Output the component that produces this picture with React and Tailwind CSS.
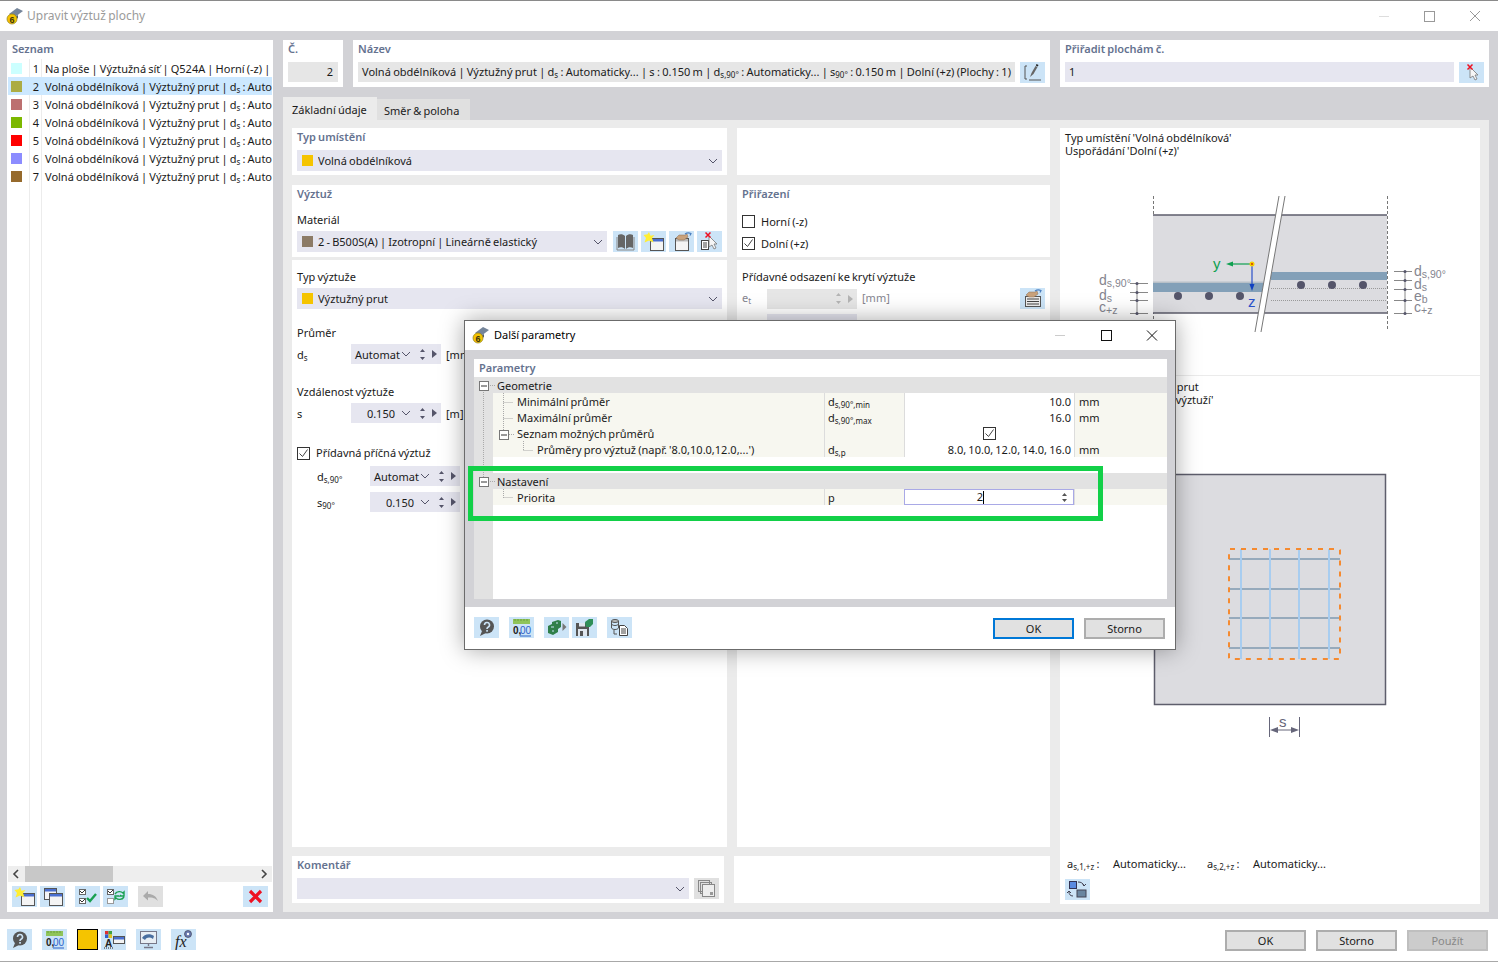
import React from 'react';

const font = "font-['Noto_Sans',sans-serif]";

const rows = [
    ['#ccffff', 'Na ploše | Výztužná síť | Q524A | Horní (-z) | Dolní (+z)'],
    ['#acac44', null],
    ['#bc7070', null],
    ['#7cb800', null],
    ['#ff0000', null],
    ['#8c8cff', null],
    ['#966a2c', null],
];

const Chevron = ({ className = '' }) => (
    <svg width="10" height="6" viewBox="0 0 10 6" className={className}>
        <path d="M1 1l4 4 4-4" fill="none" stroke="#55556a" strokeWidth="1" />
    </svg>
);

const Spin = ({ color = '#55556a' }) => (
    <div className="flex items-center gap-[6px]">
        <svg width="7" height="13" viewBox="0 0 7 13">
            <path d="M3.500 1L6 4H1z M3.500 12L1 9h5z" fill={color} />
        </svg>
        <svg width="5" height="8" viewBox="0 0 5 8">
            <path d="M0 0l5 4-5 4z" fill={color} />
        </svg>
    </div>
);

const Sub = ({ children }) => <sub className="text-[8px] leading-none">{children}</sub>;

const Header = ({ children }) => (
    <div className="h-[18px] leading-[18px] font-semibold text-[#65728f]">{children}</div>
);

const Select = ({ color, children, className = '' }) => (
    <div className={`h-[21px] bg-[#e6e6f0] flex items-center pl-[5px] pr-[4px] ${className}`}>
        {color && <span className="w-[11px] h-[11px] mr-[5px] shrink-0" style={{ backgroundColor: color }} />}
        <span className="flex-1 truncate pt-[2px]">{children}</span>
        <Chevron />
    </div>
);

const SpinBox = ({ value, align = 'right', className = '' }) => (
    <div className={`w-[90px] h-[20px] bg-[#e6e6f0] flex items-center pr-[4px] ${className}`}>
        <span className={`flex-1 min-w-0 whitespace-nowrap pl-[4px] pt-[2px] ${align === 'right' ? 'text-right pr-[5px]' : 'text-left'}`}>{value}</span>
        <Chevron className="ml-[1px] mr-[8px] shrink-0" />
        <Spin />
    </div>
);

const Check = ({ checked }) => (
    <span className="w-[13px] h-[13px] border border-[#333] bg-white flex items-center justify-center shrink-0">
        {checked && (
            <svg width="11" height="11" viewBox="0 0 11 11">
                <path d="M1.500 5.500l3 3 5-7" fill="none" stroke="#444" strokeWidth="1" />
            </svg>
        )}
    </span>
);

const Win = ({ x, y, w = 12, h = 12, title = '#4a6fd0' }) => (
    <g>
        <rect x={x + 0.5} y={y + 0.5} width={w} height={h} fill="#f4f4f4" stroke="#555" />
        <rect x={x + 1} y={y + 1} width={w - 1} height="2.5" fill={title} />
    </g>
);

const Star = ({ x, y }) => (
    <path
        transform={`translate(${x} ${y})`}
        d="M0-6l1.500 3.800L5.500-3 3 0l1.500 4.500L0 2.500-4.500 4.500-3 0-5.500-3l4-.8z"
        fill="#ffee33"
    />
);

const Hand = ({ x, y }) => (
    <g transform={`translate(${x} ${y})`}>
        <path d="M0 4l3-3h6l2-1 1 3-4 3H3z" fill="#c9a27c" stroke="#8a6f55" strokeWidth="0.5" />
        <path d="M9 0c2-1.500 4-1.500 6-.5l-1 2" fill="none" stroke="#4a7fc0" strokeWidth="1.200" />
    </g>
);

const Cursor = ({ x, y }) => (
    <path transform={`translate(${x} ${y})`} d="M0 0l8 8H5l2 4-2 1-2-4-3 2z" fill="#f6f6f6" stroke="#777" strokeWidth="0.8" />
);

const RedX = ({ x, y, s = 2.5 }) => (
    <path d={`M${x - s} ${y - s}l${2 * s} ${2 * s}m0 ${-2 * s}l${-2 * s} ${2 * s}`} stroke="#ee1122" strokeWidth="1.5" />
);

const icons = {
    help: (
        <>
            <circle cx="13" cy="9.500" r="7" fill="#555" />
            <path d="M8 14l-2 5 6-3z" fill="#555" />
            <path d="M10.500 8a2.500 2.500 0 1 1 3.500 2.300c-.8.4-1 .9-1 1.700" fill="none" stroke="#cce4f7" strokeWidth="1.600" />
            <rect x="12.200" y="13" width="1.700" height="1.700" fill="#cce4f7" />
        </>
    ),
    decimal: (
        <>
            <rect x="4" y="2" width="17" height="5" fill="#8fc45a" />
            <path d="M6 2v2M9 2v2M12 2v2M15 2v2M18 2v2" stroke="#6a9e3c" />
            <text x="4" y="17" fontSize="10" fontFamily="Liberation Sans" fontWeight="bold" fill="#222">0,</text>
            <text x="11" y="17" fontSize="10" fontFamily="Liberation Sans" fill="#2a62c9">00</text>
            <path d="M11 19h11" stroke="#2a62c9" />
        </>
    ),
    newWin: (
        <>
            <Win x={9} y={7} w={13} h={12} />
            <Star x={8} y={7} />
        </>
    ),
    copyWin: (
        <>
            <Win x={4} y={2} w={12} h={11} />
            <Win x={9} y={7} w={13} h={12} />
        </>
    ),
    checkAll: (
        <>
            <rect x="4.500" y="3.500" width="6" height="5" fill="#fff" stroke="#666" />
            <rect x="4.500" y="12.500" width="6" height="5" fill="#fff" stroke="#666" />
            <path d="M5 5l2 2 3-3M5 14l2 2 3-3" fill="none" stroke="#333" />
            <path d="M12 12l3 3 6-7" fill="none" stroke="#18a050" strokeWidth="2.400" />
        </>
    ),
    swapCheck: (
        <>
            <rect x="4.500" y="3.500" width="6" height="5" fill="#fff" stroke="#666" />
            <rect x="4.500" y="12.500" width="6" height="5" fill="#fff" stroke="#999" />
            <path d="M5 5l2 2 3-3" fill="none" stroke="#333" />
            <path d="M12 8c2-3 6-3 8-1l1-1v4h-4l1-1M21 11c-2 3-6 3-8 1l-1 1v-3h4" fill="none" stroke="#18a050" strokeWidth="1.400" />
        </>
    ),
    undo: <path d="M5 10l5-5v3c5 0 8 2 10 7-3-3-5-3.500-10-3.500v3z" fill="#aaa" />,
    del: <path d="M7 5l11 11M18 5L7 16" stroke="#ee1122" strokeWidth="3.200" />,
    book: (
        <>
            <path d="M5 4c2-1 5-1 7 1v13c-2-2-5-2-7-1z" fill="#666" />
            <path d="M20 4c-2-1-5-1-7 1v13c2-2 5-2 7-1z" fill="#666" />
            <path d="M4 6v13h17V6" fill="none" stroke="#888" />
        </>
    ),
    handWin: (
        <>
            <Win x={6} y={7} w={13} h={12} title="#bbb" />
            <Hand x={7} y={3} />
        </>
    ),
    handList: (
        <>
            <rect x="5.500" y="8.500" width="15" height="10" fill="#eee" stroke="#555" />
            <path d="M7 11h12M7 13.500h12M7 16h12" stroke="#444" />
            <Hand x={6} y={3} />
        </>
    ),
    delPick: (
        <>
            <rect x="4.500" y="9.500" width="7" height="9" fill="#fff" stroke="#444" />
            <path d="M6 12h4M6 14h4M6 16h4" stroke="#444" />
            <Cursor x={12} y={5} />
            <RedX x={11} y={4} />
        </>
    ),
    pick: (
        <>
            <Cursor x={11} y={5} />
            <RedX x={11} y={5} />
        </>
    ),
    edit: (
        <>
            <path d="M7 4H5v13h2M9 18h12" fill="none" stroke="#555" strokeWidth="1" />
            <path d="M10 15l1.500-4 4-7 2 1-4 7z" fill="#666" />
            <path d="M15.800 3.500l.7-1.500 2 1-.7 1.500z" fill="#222" />
        </>
    ),
    palette: (
        <>
            <rect x="4" y="2" width="3.500" height="3.500" fill="#e03030" />
            <rect x="7.500" y="2" width="3.500" height="3.500" fill="#40a040" />
            <rect x="4" y="5.500" width="3.500" height="3.500" fill="#3060d0" />
            <rect x="7.500" y="5.500" width="3.500" height="3.500" fill="#e0c020" />
            <Win x={12} y={7} w={11} h={7} title="#4a6fd0" />
            <text x="4" y="18" fontSize="10" fontFamily="Liberation Sans" fontWeight="bold" fill="#222">A</text>
            <path d="M3 19h10" stroke="#222" strokeDasharray="1 1" />
        </>
    ),
    monitor: (
        <>
            <rect x="4.500" y="2.500" width="16" height="12" fill="#e8eef4" stroke="#778" />
            <path d="M6 9c2-4 8-5 12-2l-1 3c-3-2-6-2-8 1z" fill="#4a6fa0" />
            <path d="M12.500 15v2M8 18.500h9" stroke="#778" strokeWidth="1.400" />
        </>
    ),
    fx: (
        <>
            <text x="4" y="18" fontSize="16" fontStyle="italic" fontFamily="Liberation Serif" fill="#222">fx</text>
            <circle cx="17" cy="5" r="3.500" fill="#6a7ab0" stroke="#334" strokeWidth="0.6" />
            <circle cx="17" cy="5" r="1.200" fill="#fff" />
        </>
    ),
    arrowGreen: (
        <>
            <path d="M4 9l4-2V5l6-2 3 1v6l-3 2v3l-5 3-5-2z" fill="#2f7f4a" />
            <path d="M7 10h3M8 14h2M12 6h2" stroke="#cce4f7" />
            <path d="M18.500 6l4 4-4 4z" fill="#777" />
        </>
    ),
    saveGreen: (
        <>
            <path d="M4 6h13v13H4z" fill="#555" />
            <rect x="7" y="6" width="6" height="3.500" fill="#dfe6ee" />
            <rect x="6" y="12" width="9" height="7" fill="#dfe6ee" />
            <rect x="8" y="14" width="3" height="5" fill="#555" />
            <path d="M13 5l4-3h4v5l-3 3h-4z" fill="#2f8f58" />
        </>
    ),
    dbDoc: (
        <>
            <ellipse cx="8" cy="4" rx="3.500" ry="1.500" fill="#bbb" stroke="#555" />
            <path d="M4.500 4v7c1 2 6 2 7 0V4M4.500 7c1 2 6 2 7 0" fill="none" stroke="#555" />
            <path d="M7 13v4h3" fill="none" stroke="#555" />
            <path d="M12.500 8.500h5l3 3v7h-8z" fill="#fff" stroke="#444" />
            <path d="M14 12h5M14 14h5M14 16h5" stroke="#444" />
        </>
    ),
    swapView: (
        <>
            <rect x="4.500" y="2.500" width="7" height="7" fill="#5a8ae0" stroke="#335" />
            <rect x="12" y="11" width="9" height="7" fill="#6a86a0" stroke="#445" />
            <path d="M13 3c3 0 5 1 6 4M18 5l1 2 2-2M4 13c0 2 1 4 4 4M6 14l-2-2-2 2" fill="none" stroke="#445" />
        </>
    ),
    copyGray: (
        <>
            <rect x="4.500" y="2.500" width="11" height="11" fill="none" stroke="#888" />
            <rect x="6.500" y="4.500" width="11" height="11" fill="none" stroke="#888" />
            <rect x="8.500" y="6.500" width="12" height="12" fill="#eee" stroke="#888" />
            <rect x="16" y="14" width="3" height="3" fill="#999" />
        </>
    ),
};

const IconBtn = ({ icon, disabled = false, className = '' }) => (
    <button className={`w-[25px] h-[21px] shrink-0 ${disabled ? 'bg-[#e0e0e0]' : 'bg-[#cce4f7]'} ${className}`}>
        <svg width="25" height="21" viewBox="0 0 25 21" className="block">{icons[icon]}</svg>
    </button>
);

const AppIcon = () => (
    <svg width="17" height="17" viewBox="0 0 17 17" className="shrink-0">
        <path d="M3 6l8-6 6 3-8 6z" fill="#75859a" />
        <path d="M4 6.500l5 2.500 3-2v3l-3 2z" fill="#4f5d70" />
        <circle cx="6" cy="11" r="5" fill="#f5c400" stroke="#8f7d1c" strokeWidth="0.7" />
        <text x="3.600" y="14.500" fontSize="9" fontWeight="bold" fontFamily="Liberation Sans" fill="#3a3410">6</text>
    </svg>
);

const DlgBtn = ({ children, variant, className = '' }) => {
    const look = variant === 'primary'
        ? 'border-[#0078d7] bg-[#e1e1e1]'
        : variant === 'disabled'
            ? 'border-[#bfbfbf] bg-[#cccccc] text-[#888]'
            : 'border-[#adadad] bg-[#e1e1e1]';
    return (
        <button className={`w-[81px] h-[21px] border-2 text-center leading-[17px] ${look} ${className}`}>
            {children}
        </button>
    );
};

const ParamRow = ({ label, indent, sym, value, unit, children }) => (
    <div className="h-[16px] flex">
        <div className="w-[19px] bg-[#e2e2e2]" />
        <div className={`w-[331px] bg-[#f7f7f0] leading-[18px] whitespace-nowrap ${indent}`}>{label}</div>
        <div className="w-[80px] bg-[#f7f7f0] border-l border-[#dcdcdc] pl-[3px] leading-[18px]">{sym}</div>
        {children || (
            <div className="w-[170px] text-right pr-[3px] border-l border-[#dcdcdc] leading-[18px] bg-white">{value}</div>
        )}
        <div className="flex-1 bg-[#f7f7f0] border-l border-[#dcdcdc] pl-[4px] leading-[18px]">{unit}</div>
    </div>
);

const SlabDrawing = () => (
    <svg width="420" height="150" viewBox="1060 190 420 150" fontFamily="Liberation Sans" className="block">
        <path d="M1153.500 196v135M1387.500 196v135" stroke="#777" strokeDasharray="3 2" />
        <rect x="1153" y="215" width="234" height="98" fill="#dcdce0" />
        <path d="M1153 215h234M1153 313h234" stroke="#5e5e6c" strokeWidth="1.600" />
        <rect x="1153" y="283" width="110" height="9" fill="#83a0b8" />
        <rect x="1153" y="281.500" width="110" height="1.500" fill="#b8c0c8" />
        <rect x="1271" y="272" width="116" height="8" fill="#83a0b8" />
        <path d="M1271 288.500h116M1271 300.500h116" stroke="#999" strokeDasharray="1 1" />
        <g fill="#55556a">
            <circle cx="1178" cy="296" r="4" />
            <circle cx="1209" cy="296" r="4" />
            <circle cx="1240" cy="296" r="4" />
            <circle cx="1301" cy="285" r="4" />
            <circle cx="1332" cy="285" r="4" />
            <circle cx="1363" cy="285" r="4" />
        </g>
        <path d="M1279 196l-24 136h6l24-136z" fill="#fff" />
        <path d="M1279 196l-24 136M1285 196l-24 136" stroke="#777" />
        <path d="M1252 264h-20" stroke="#10a050" strokeWidth="1.200" />
        <path d="M1226 264l7-2.500v5z" fill="#10a050" />
        <path d="M1252 264v22" stroke="#2a50c8" strokeWidth="1.200" />
        <path d="M1252 291l-2.500-7h5z" fill="#1040c0" />
        <circle cx="1252" cy="264" r="2.500" fill="#f5d000" />
        <circle cx="1252" cy="264" r="0.900" fill="#d02000" />
        <text x="1213" y="269" fontSize="15" fill="#10a050">y</text>
        <text x="1248" y="307" fontSize="15" fill="#2a50c8">z</text>
        <path d="M1137 283v30M1130 283.500h18M1130 292.500h18M1130 300.500h18M1130 313.500h18" stroke="#888" />
        <path d="M1405 271v42M1394 271.500h18M1394 280.500h18M1394 289.500h18M1394 300.500h18M1394 313.500h18" stroke="#888" />
        <g fill="#55556a">
            <circle cx="1137" cy="283.500" r="1.500" />
            <circle cx="1137" cy="292.500" r="1.500" />
            <circle cx="1137" cy="300.500" r="1.500" />
            <circle cx="1137" cy="313.500" r="1.500" />
            <circle cx="1405" cy="271.500" r="1.500" />
            <circle cx="1405" cy="280.500" r="1.500" />
            <circle cx="1405" cy="289.500" r="1.500" />
            <circle cx="1405" cy="300.500" r="1.500" />
            <circle cx="1405" cy="313.500" r="1.500" />
        </g>
        <g fill="#85858f" fontSize="14">
            <text x="1099" y="285">d<tspan fontSize="10.500" dy="2">s,90°</tspan></text>
            <text x="1099" y="300">d<tspan fontSize="10.500" dy="2">s</tspan></text>
            <text x="1099" y="312">c<tspan fontSize="10.500" dy="2">+z</tspan></text>
            <text x="1414" y="276">d<tspan fontSize="10.500" dy="2">s,90°</tspan></text>
            <text x="1414" y="289">d<tspan fontSize="10.500" dy="2">s</tspan></text>
            <text x="1414" y="301">e<tspan fontSize="10.500" dy="2">b</tspan></text>
            <text x="1414" y="312">c<tspan fontSize="10.500" dy="2">+z</tspan></text>
        </g>
    </svg>
);

const PlanDrawing = () => (
    <svg width="420" height="270" viewBox="1060 470 420 270" fontFamily="Liberation Sans" className="block">
        <rect x="1154.500" y="474.500" width="231" height="230" fill="#dcdce0" stroke="#5e5e6c" strokeWidth="1.500" />
        <path d="M1229 559h111M1229 589h111M1229 618h111M1229 648h111" stroke="#7f99b0" strokeWidth="1.600" />
        <path d="M1241 549v110M1270 549v110M1299 549v110M1329 549v110" stroke="#a8cdf0" strokeWidth="2" />
        <rect x="1229" y="549" width="111" height="110" rx="1" fill="none" stroke="#f58a30" strokeWidth="2" strokeDasharray="5 6" />
        <path d="M1269.500 717v20M1299.500 717v20" stroke="#66667a" />
        <path d="M1276 730h16" stroke="#66667a" />
        <path d="M1270 730l8-3v6zM1299 730l-8-3v6z" fill="#66667a" />
        <text x="1279" y="727" fontSize="15" fill="#66667a">s</text>
    </svg>
);

const TreeLines = () => (
    <svg width="90" height="130" viewBox="474 377 90 130" className="absolute left-0 top-[18px] pointer-events-none">
        <path
            d="M483.500 390v87M488 385.500h7M488 481.500h7M503.500 393v37M503.500 402.500h10M503.500 418.500h10M509 434.500h6M523.500 441v10M523.500 450.500h10M503.500 489v9M503.500 497.500h10"
            fill="none"
            stroke="#aaa"
            strokeDasharray="1 1"
        />
        <g fill="#fff" stroke="#777">
            <rect x="479.500" y="381.500" width="9" height="9" />
            <rect x="499.500" y="430.500" width="9" height="9" />
            <rect x="479.500" y="477.500" width="9" height="9" />
        </g>
        <path d="M481 386h6M501 435h6M481 482h6" stroke="#333" />
    </svg>
);

const ParamsDialog = () => (
    <div className="absolute left-[464px] top-[320px] w-[712px] h-[330px] bg-white border border-[#6b6b6b] shadow-[0_0_22px_rgba(0,0,0,0.35)] flex flex-col">
        <div className="h-[29px] flex items-center pl-[7px]">
            <AppIcon />
            <span className="ml-[5px] text-black">Další parametry</span>
            <div className="ml-auto flex items-center">
                <svg width="46" height="29" viewBox="0 0 46 29">
                    <path d="M18 14.500h10" stroke="#ccc" />
                </svg>
                <svg width="46" height="29" viewBox="0 0 46 29">
                    <rect x="18.500" y="9.500" width="10" height="10" fill="none" stroke="#111" />
                </svg>
                <svg width="46" height="29" viewBox="0 0 46 29">
                    <path d="M18 9.500l10 10m0-10l-10 10" stroke="#111" />
                </svg>
            </div>
        </div>
        <div className="h-[257px] bg-[#d2d2d6] pl-[9px] pr-[8px] py-[9px]">
            <div className="relative h-[240px] bg-white flex flex-col">
                <div className="h-[18px] px-[5px] leading-[18px] font-semibold text-[#65728f]">Parametry</div>
                <div className="h-[16px] bg-[#e2e2e2] pl-[23px] leading-[18px]">Geometrie</div>
                <ParamRow label="Minimální průměr" indent="pl-[24px]" sym={<>d<Sub>s,90°,min</Sub></>} value="10.0" unit="mm" />
                <ParamRow label="Maximální průměr" indent="pl-[24px]" sym={<>d<Sub>s,90°,max</Sub></>} value="16.0" unit="mm" />
                <ParamRow label="Seznam možných průměrů" indent="pl-[24px]">
                    <div className="w-[170px] bg-white border-l border-[#dcdcdc] flex items-center justify-center">
                        <Check checked />
                    </div>
                </ParamRow>
                <ParamRow label="Průměry pro výztuž (např. '8.0,10.0,12.0,...')" indent="pl-[44px]" sym={<>d<Sub>s,p</Sub></>} value="8.0, 10.0, 12.0, 14.0, 16.0" unit="mm" />
                <div className="h-[16px] flex"><div className="w-[19px] bg-[#e2e2e2]" /></div>
                <div className="h-[16px] bg-[#e2e2e2] pl-[23px] leading-[18px]">Nastavení</div>
                <ParamRow label="Priorita" indent="pl-[24px]" sym="p">
                    <div className="w-[170px] h-[16px] bg-white border border-[#a9a9e6] flex items-center">
                        <span className="w-[78px] text-right leading-[14px]">2</span>
                        <span className="w-[1px] h-[13px] bg-black" />
                        <svg width="7" height="11" viewBox="0 0 7 11" className="ml-auto mr-[5px]">
                            <path d="M3.500 1L6 4H1z M3.500 10L1 7h5z" fill="#555" />
                        </svg>
                    </div>
                </ParamRow>
                <div className="flex-1 flex">
                    <div className="w-[19px] bg-[#e2e2e2]" />
                </div>
                <TreeLines />
            </div>
        </div>
        <div className="flex-1 flex items-center pl-[9px] pr-[10px]">
            <IconBtn icon="help" className="mb-[2px]" />
            <IconBtn icon="decimal" className="ml-[10px] mb-[2px]" />
            <IconBtn icon="arrowGreen" className="ml-[10px] mb-[2px]" />
            <IconBtn icon="saveGreen" className="ml-[3px] mb-[2px]" />
            <IconBtn icon="dbDoc" className="ml-[10px] mb-[2px]" />
            <DlgBtn variant="primary" className="ml-auto">OK</DlgBtn>
            <DlgBtn className="ml-[10px]">Storno</DlgBtn>
        </div>
        <div className="absolute left-[3px] top-[145px] w-[635px] h-[55px] border-[5px] border-[#12d048] pointer-events-none" />
    </div>
);

const App = () => {
    return (
        <div className={`relative w-[1498px] h-[962px] overflow-hidden flex flex-col bg-white text-[11px] text-[#1a1a1a] [word-spacing:-0.7px] ${font}`}>
            {/* title bar */}
            <div className="h-[31px] border-t border-[#8a8a8a] flex items-center pl-[6px] shrink-0">
                <AppIcon />
                <span className="ml-[4px] text-[#9b9b9b] text-[12px]">Upravit výztuž plochy</span>
                <div className="ml-auto flex items-center">
                    <svg width="46" height="30" viewBox="0 0 46 30">
                        <path d="M19 15.500h10" stroke="#ddd" />
                    </svg>
                    <svg width="46" height="30" viewBox="0 0 46 30">
                        <rect x="18.500" y="10.500" width="10" height="10" fill="none" stroke="#999" />
                    </svg>
                    <svg width="46" height="30" viewBox="0 0 46 30">
                        <path d="M18 10l10 10m0-10L18 20" stroke="#999" />
                    </svg>
                </div>
            </div>

            <div className="flex-1 bg-[#d2d2d6] flex gap-[10px] pl-[7px] pt-[9px] pb-[7px] min-h-0">
                {/* list */}
                <div className="relative w-[266px] bg-white flex flex-col px-[1px]">
                    <div className="h-[19px] pl-[4px] leading-[18px] font-semibold text-[#65728f]">Seznam</div>
                    <div className="flex-1 relative overflow-hidden">
                        <div className="absolute left-[21px] top-0 bottom-0 w-[1px] bg-[#ececec]" />
                        <div className="absolute left-[33px] top-0 bottom-0 w-[1px] bg-[#ececec]" />
                        {rows.map(([color, text], i) => (
                            <div key={i} className={`relative h-[18px] flex items-center whitespace-nowrap overflow-hidden ${i === 1 ? 'bg-[#cce8ff]' : ''}`}>
                                <span className="w-[11px] h-[11px] ml-[3px] shrink-0" style={{ backgroundColor: color }} />
                                <span className="w-[17px] text-right mr-[6px] shrink-0 pt-[2px]">{i + 1}</span>
                                <span className="pt-[2px]">{text || <>Volná obdélníková | Výztužný prut | d<Sub>s</Sub> : Automaticky...</>}</span>
                            </div>
                        ))}
                    </div>
                    <div className="h-[16px] bg-[#eeeeee] flex items-center">
                        <svg width="17" height="16" viewBox="0 0 17 16"><path d="M10 4l-4 4 4 4" fill="none" stroke="#444" strokeWidth="1.600" /></svg>
                        <div className="w-[88px] h-full bg-[#c8c8c8]" />
                        <svg width="17" height="16" viewBox="0 0 17 16" className="ml-auto"><path d="M7 4l4 4-4 4" fill="none" stroke="#444" strokeWidth="1.600" /></svg>
                    </div>
                    <div className="h-[30px] flex items-center pl-[4px] pb-[2px]">
                        <IconBtn icon="newWin" />
                        <IconBtn icon="copyWin" className="ml-[3px]" />
                        <IconBtn icon="checkAll" className="ml-[10px]" />
                        <IconBtn icon="swapCheck" className="ml-[3px]" />
                        <IconBtn icon="undo" disabled className="ml-[10px]" />
                        <IconBtn icon="del" className="ml-[80px]" />
                    </div>
                </div>

                <div className="w-[1206px] flex flex-col">
                    {/* header row */}
                    <div className="h-[47px] flex gap-[10px] shrink-0">
                        <div className="w-[60px] bg-white px-[5px]">
                            <div className="h-[18px] leading-[18px] font-semibold text-[#65728f]">Č.</div>
                            <div className="mt-[4px] h-[20px] bg-[#e6e6e6] text-right pr-[5px] leading-[20px]">2</div>
                        </div>
                        <div className="w-[697px] bg-white px-[5px]">
                            <div className="h-[18px] leading-[18px] font-semibold text-[#65728f]">Název</div>
                            <div className="mt-[4px] flex gap-[5px]">
                                <div className="w-[657px] h-[20px] bg-[#e6e6e6] pl-[4px] leading-[20px] whitespace-nowrap overflow-hidden [word-spacing:-0.55px]">
                                    Volná obdélníková | Výztužný prut | d<Sub>s</Sub> : Automaticky... | s : 0.150 m | d<Sub>s,90°</Sub> : Automaticky... | s<Sub>90°</Sub> : 0.150 m | Dolní (+z) (Plochy : 1)
                                </div>
                                <IconBtn icon="edit" />
                            </div>
                        </div>
                        <div className="w-[429px] bg-white px-[5px]">
                            <div className="h-[18px] leading-[18px] font-semibold text-[#65728f]">Přiřadit plochám č.</div>
                            <div className="mt-[4px] flex gap-[5px]">
                                <div className="w-[389px] h-[20px] bg-[#e6e6f0] pl-[4px] leading-[20px]">1</div>
                                <IconBtn icon="pick" />
                            </div>
                        </div>
                    </div>

                    {/* tabs */}
                    <div className="mt-[10px] h-[23px] flex items-end shrink-0">
                        <div className="w-[94px] h-[23px] bg-[#ebebeb] pl-[9px] leading-[25px]">Základní údaje</div>
                        <div className="w-[93px] h-[21px] bg-[#e0e0e0] pl-[7px] leading-[23px]">Směr &amp; poloha</div>
                    </div>

                    <div className="flex-1 bg-[#ebebeb] pl-[9px] pt-[8px] pb-[8px] flex gap-[10px] min-h-0">
                        {/* column 1 */}
                        <div className="w-[435px] flex flex-col">
                            <div className="h-[47px] bg-white px-[5px]">
                                <Header>Typ umístění</Header>
                                <Select color="#f5c400" className="mt-[4px]">Volná obdélníková</Select>
                            </div>
                            <div className="mt-[10px] h-[72px] bg-white px-[5px]">
                                <Header>Výztuž</Header>
                                <div className="mt-[8px] h-[18px] leading-[18px]">Materiál</div>
                                <div className="mt-[2px] flex">
                                    <Select color="#8c7b66" className="w-[310px]">2 - B500S(A) | Izotropní | Lineárně elastický</Select>
                                    <IconBtn icon="book" className="ml-[6px]" />
                                    <IconBtn icon="newWin" className="ml-[3px]" />
                                    <IconBtn icon="handWin" className="ml-[3px]" />
                                    <IconBtn icon="delPick" className="ml-[3px]" />
                                </div>
                            </div>
                            <div className="mt-[3px] h-[587px] bg-white px-[5px]">
                                <div className="pt-[8px] h-[28px] leading-[18px]">Typ výztuže</div>
                                <Select color="#f5c400">Výztužný prut</Select>
                                <div className="mt-[15px] h-[18px] leading-[18px]">Průměr</div>
                                <div className="mt-[2px] flex items-center">
                                    <span className="w-[54px] pt-[2px]">d<Sub>s</Sub></span>
                                    <SpinBox value="Automat" align="left" />
                                    <span className="ml-[5px] pt-[2px]">[mm]</span>
                                </div>
                                <div className="mt-[19px] h-[18px] leading-[18px]">Vzdálenost výztuže</div>
                                <div className="mt-[2px] flex items-center">
                                    <span className="w-[54px] pt-[2px]">s</span>
                                    <SpinBox value="0.150" />
                                    <span className="ml-[5px] pt-[2px]">[m]</span>
                                </div>
                                <div className="mt-[24px] h-[13px] flex items-center">
                                    <Check checked />
                                    <span className="ml-[6px]">Přídavná příčná výztuž</span>
                                </div>
                                <div className="mt-[6px] flex items-center pl-[20px]">
                                    <span className="w-[53px] pt-[2px]">d<Sub>s,90°</Sub></span>
                                    <SpinBox value="Automat" align="left" />
                                </div>
                                <div className="mt-[6px] flex items-center pl-[20px]">
                                    <span className="w-[53px] pt-[2px]">s<Sub>90°</Sub></span>
                                    <SpinBox value="0.150" />
                                </div>
                            </div>
                            <div className="mt-[9px] h-[47px] w-[432px] bg-white px-[5px]">
                                <Header>Komentář</Header>
                                <div className="mt-[4px] flex gap-[5px]">
                                    <Select className="w-[392px]" />
                                    <IconBtn icon="copyGray" disabled />
                                </div>
                            </div>
                        </div>

                        {/* column 2 */}
                        <div className="w-[313px] flex flex-col">
                            <div className="h-[47px] bg-white" />
                            <div className="mt-[10px] h-[72px] bg-white px-[5px]">
                                <Header>Přiřazení</Header>
                                <div className="mt-[12px] h-[13px] flex items-center">
                                    <Check />
                                    <span className="ml-[6px] pt-[2px]">Horní (-z)</span>
                                </div>
                                <div className="mt-[9px] h-[13px] flex items-center">
                                    <Check checked />
                                    <span className="ml-[6px] pt-[2px]">Dolní (+z)</span>
                                </div>
                            </div>
                            <div className="mt-[3px] h-[587px] bg-white px-[5px]">
                                <div className="pt-[8px] h-[28px] leading-[18px]">Přídavné odsazení ke krytí výztuže</div>
                                <div className="flex items-center">
                                    <span className="w-[25px] text-[#85858f]">e<Sub>t</Sub></span>
                                    <div className="w-[90px] h-[20px] bg-[#e6e6e6] flex items-center justify-end pr-[4px]">
                                        <Spin color="#b4b4b4" />
                                    </div>
                                    <span className="ml-[5px] text-[#85858f]">[mm]</span>
                                    <IconBtn icon="handList" className="ml-auto" />
                                </div>
                                <div className="mt-[5px] ml-[25px] w-[90px] h-[20px] bg-[#e6e6f0]" />
                            </div>
                            <div className="mt-[9px] -ml-[3px] h-[47px] w-[316px] bg-white" />
                        </div>

                        {/* column 3 */}
                        <div className="w-[420px] bg-white flex flex-col">
                            <div className="h-[248px] border-b border-[#ebebeb] flex flex-col">
                                <div className="pt-[3px] pl-[5px] leading-[13px]">
                                    <div>Typ umístění 'Volná obdélníková'</div>
                                    <div>Uspořádání 'Dolní (+z)'</div>
                                </div>
                                <div className="mt-[33px]"><SlabDrawing /></div>
                            </div>
                            <div className="pt-[4px] pl-[5px] leading-[13px]">
                                <div>Typ výztuže 'Výztužný prut</div>
                                <div>Uspořádání 'Dvou sítí výztuží'</div>
                            </div>
                            <div className="mt-[64px]"><PlanDrawing /></div>
                            <div className="mt-auto pl-[7px] h-[16px] flex items-center">
                                <span className="w-[46px]">a<Sub>s,1,+z</Sub> :</span>
                                <span className="w-[94px]">Automaticky...</span>
                                <span className="w-[46px]">a<Sub>s,2,+z</Sub> :</span>
                                <span>Automaticky...</span>
                            </div>
                            <div className="mt-[7px] mb-[4px] pl-[5px] flex"><IconBtn icon="swapView" /></div>
                        </div>
                    </div>
                </div>
            </div>

            {/* footer */}
            <div className="h-[43px] border-b border-[#a8a8a8] flex items-center pl-[7px] pr-[10px] shrink-0">
                <IconBtn icon="help" className="mb-[2px]" />
                <IconBtn icon="decimal" className="ml-[10px] mb-[2px]" />
                <span className="ml-[10px] mb-[2px] w-[21px] h-[21px] bg-[#f5c400] border border-black" />
                <IconBtn icon="palette" className="ml-[3px] mb-[2px]" />
                <IconBtn icon="monitor" className="ml-[10px] mb-[2px]" />
                <IconBtn icon="fx" className="ml-[10px] mb-[2px]" />
                <DlgBtn className="ml-auto">OK</DlgBtn>
                <DlgBtn className="ml-[10px]">Storno</DlgBtn>
                <DlgBtn variant="disabled" className="ml-[10px]">Použít</DlgBtn>
            </div>

            <ParamsDialog />
        </div>
    );
};

export default App;
